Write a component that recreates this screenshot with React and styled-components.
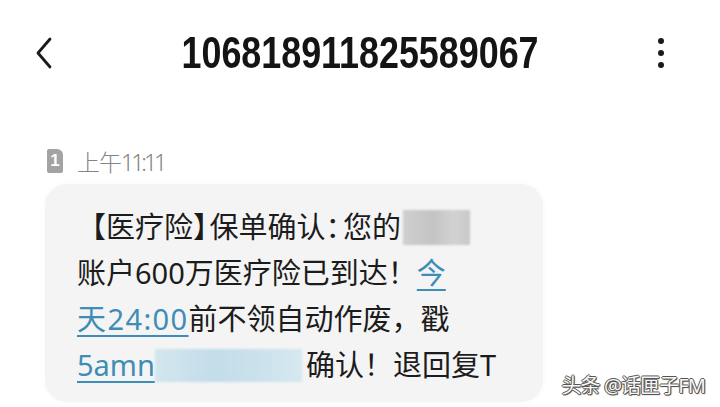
import React from "react";
import styled, { createGlobalStyle } from "styled-components";

const GlobalStyle = createGlobalStyle`
    html, body {
        margin: 0;
        padding: 0;
        background: #ffffff;
    }
`;

const cjk = `"Noto Sans", "Noto Sans CJK SC", sans-serif`;

const Page = styled.div`
    width: 720px;
    height: 407px;
    overflow: hidden;
    position: relative;
    background: #ffffff;
    font-family: ${cjk};
`;

const Header = styled.div`
    height: 106px;
    display: grid;
    grid-template-columns: 1fr auto 1fr;
    align-items: center;
    padding: 0 36px;
    box-sizing: border-box;
`;

const BackButton = styled.div`
    display: flex;
    align-items: center;
`;

const Title = styled.div`
    font-family: "Liberation Sans", sans-serif;
    font-weight: 700;
    font-size: 44px;
    color: #141414;
    line-height: 1;
    transform: scaleX(0.815);
`;

const MenuButton = styled.div`
    display: flex;
    flex-direction: column;
    align-items: flex-end;
    gap: 6px;
    padding-right: 20px;
`;

const Dot = styled.span`
    width: 6px;
    height: 6px;
    border-radius: 50%;
    background: #1a1a1a;
`;

const Meta = styled.div`
    margin: 42px 0 0 47px;
    height: 26px;
    display: flex;
    align-items: center;
    gap: 14px;
    color: #858585;
    font-size: 23px;
    font-weight: 300;
`;

const SimBadge = styled.span`
    width: 16px;
    height: 24px;
    border-radius: 2px 6px 2px 2px;
    background: #a3a3a3;
    color: #fff;
    font-family: "Liberation Sans", sans-serif;
    font-weight: 700;
    font-size: 17px;
    display: flex;
    align-items: center;
    justify-content: center;
`;

const Time = styled.span`
    font-family: ${cjk};
    letter-spacing: -1px;
`;

const Digits = styled.span`
    letter-spacing: -3px;
`;

const Bubble = styled.div`
    margin: 10px 0 0 45px;
    width: 498px;
    height: 218px;
    background: #f4f4f4;
    border-radius: 22px;
    box-sizing: border-box;
    padding: 20px 0 0 32px;
    box-shadow: 0 0 6px rgba(0, 0, 0, 0.03);
`;

const Line = styled.div`
    height: 46px;
    line-height: 46px;
    font-size: 29px;
    color: #1c1c1c;
    white-space: nowrap;
    display: flex;
    align-items: center;
`;

const Punct = styled.span`
    font-feature-settings: "halt";
    margin-right: ${(p) => p.$mr || 0}px;
`;

const Link = styled.span`
    color: #3e8db6;
    text-decoration: underline;
    text-decoration-thickness: 2px;
    text-underline-offset: 5px;
    letter-spacing: ${(p) => p.$ls || 0}px;
`;

const Mosaic = styled.span`
    display: inline-block;
    width: ${(p) => p.$w}px;
    height: ${(p) => p.$h}px;
    margin-left: ${(p) => p.$ml || 0}px;
    margin-right: ${(p) => p.$mr || 0}px;
    background: ${(p) =>
        p.$blue
            ? "linear-gradient(90deg, #d3e6ef 0%, #c3dde9 40%, #cbe2ec 70%, #d6e8f0 100%)"
            : "linear-gradient(90deg, #cfcfcf 0%, #c4c4c4 45%, #d2d2d2 75%, #c9c9c9 100%)"};
    filter: blur(1px);
`;

const Watermark = styled.div`
    position: absolute;
    right: 15px;
    bottom: 8px;
    font-family: ${cjk};
    font-size: 20px;
    color: #f7f7f7;
    text-shadow: 1px 0 0 #555, -1px 0 0 #555, 0 1px 0 #555, 0 -1px 0 #555,
        1px 1px 1px #444;
    letter-spacing: -0.9px;
`;

export default function App() {
    return (
        <Page>
            <GlobalStyle />
            <Header>
                <BackButton>
                    <svg width="16" height="32" viewBox="0 0 16 32">
                        <polyline
                            points="14,2 2,16 14,30"
                            fill="none"
                            stroke="#1a1a1a"
                            strokeWidth="2.8"
                            strokeLinecap="round"
                            strokeLinejoin="round"
                        />
                    </svg>
                </BackButton>
                <Title>106818911825589067</Title>
                <MenuButton>
                    <Dot />
                    <Dot />
                    <Dot />
                </MenuButton>
            </Header>
            <Meta>
                <SimBadge>1</SimBadge>
                <Time>
                    上午<Digits>11:11</Digits>
                </Time>
            </Meta>
            <Bubble>
                <Line>
                    【医疗险<Punct $mr={2}>】</Punct>保单确认
                    <Punct $mr={3}>：</Punct>您的
                    <Mosaic $w={67} $h={35} $ml={2} />
                </Line>
                <Line>
                    账户600万医疗险已到达！<Link>今</Link>
                </Line>
                <Line>
                    <Link $ls={1.4}>天24:00</Link>前不领自动作废，戳
                </Line>
                <Line>
                    <Link>5amn</Link>
                    <Mosaic $blue $w={147} $h={33} $mr={4} />
                    确认！退回复T
                </Line>
            </Bubble>
            <Watermark>头条 @话匣子FM</Watermark>
        </Page>
    );
}
